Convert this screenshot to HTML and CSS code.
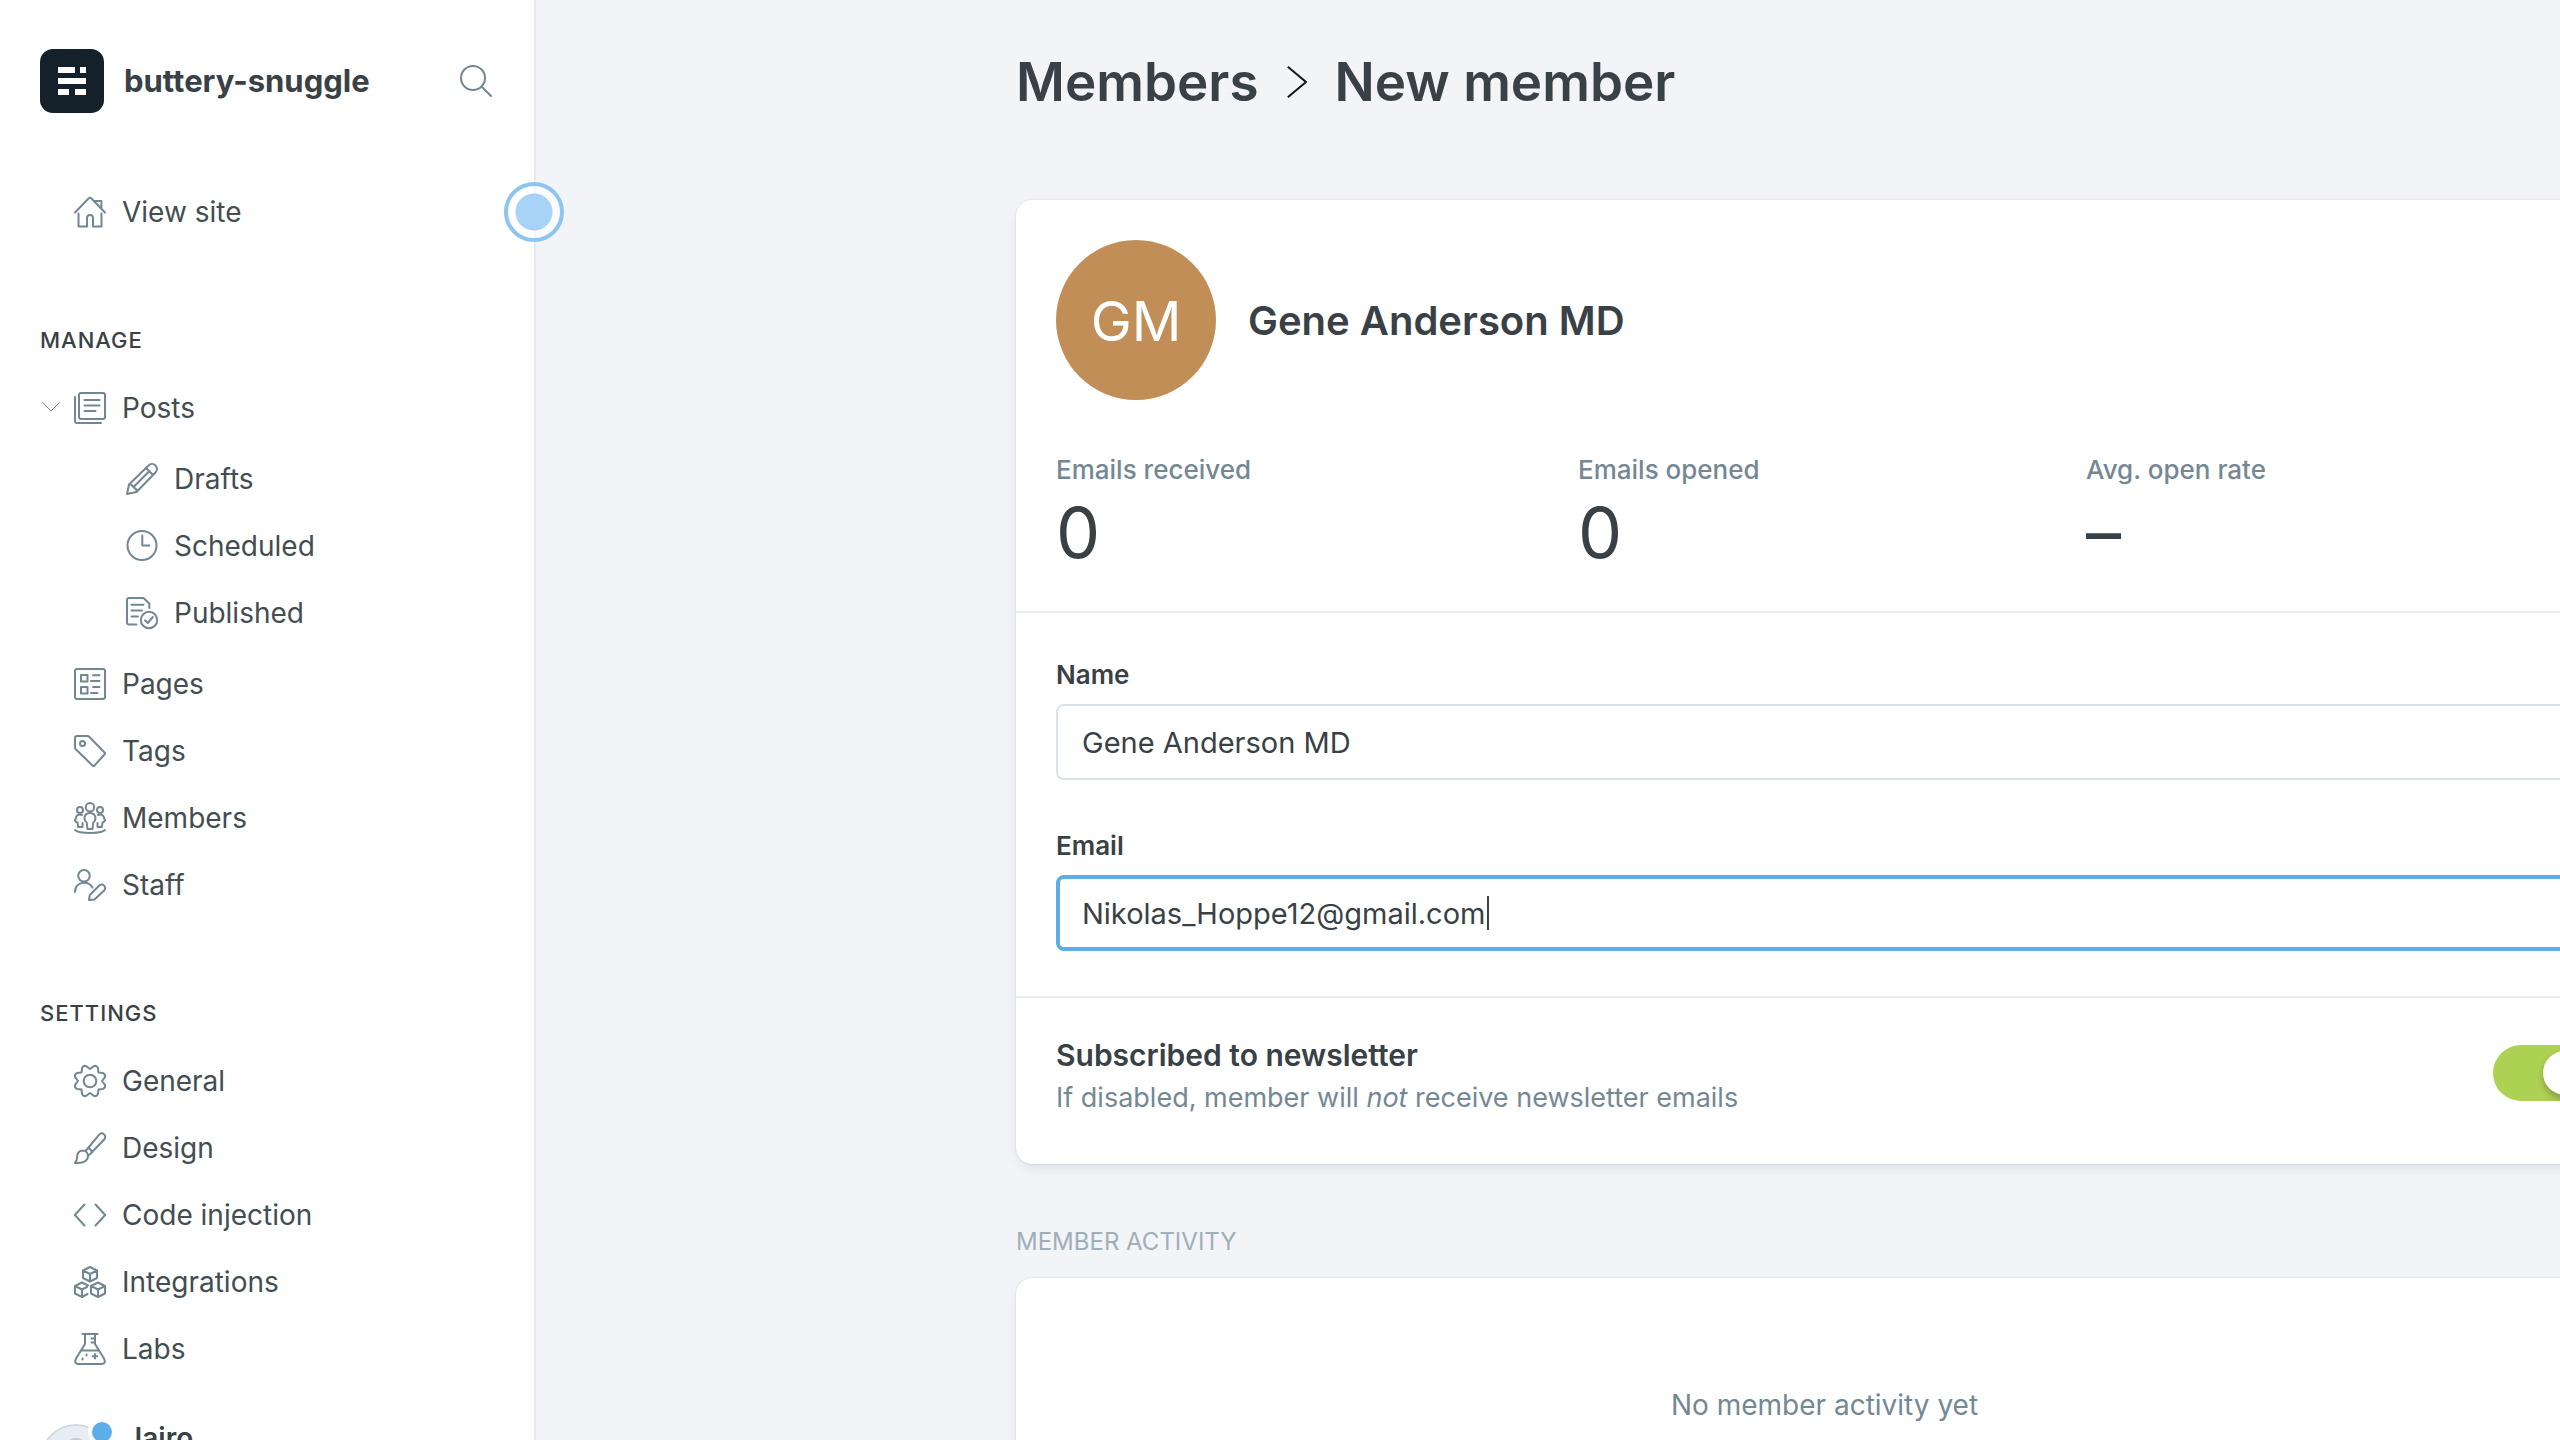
FILE: index.html
```html
<!DOCTYPE html>
<html lang="en">
<head>
<meta charset="utf-8">
<meta name="viewport" content="width=device-width, initial-scale=1">
<title>New member - buttery-snuggle</title>
<link rel="stylesheet" href="styles.css">
</head>
<body>
<div class="app">
  <aside class="sidebar">
    <header class="brand">
      <svg class="brand-logo" viewBox="0 0 64 64" aria-hidden="true">
        <rect width="64" height="64" rx="13" fill="#15212a"/>
        <path fill="#fff" d="M18 18h17v6H18zM40 18h6v6h-6zM18 29h28v6H18zM18 40h11v6H18zM35 40h11v6H35z"/>
      </svg>
      <span class="brand-name">buttery-snuggle</span>
      <button class="search" type="button" aria-label="Search">
        <svg class="icon" viewBox="0 0 32 32"><circle cx="13" cy="13" r="12"/><path d="M22 22l9 9"/></svg>
      </button>
    </header>

    <nav class="nav">
      <ul class="nav-list nav-top">
        <li><a class="nav-link" href="#"><svg class="icon" viewBox="0 0 32 32"><path d="M1 16.5L14.8 2.300q1.200-1 2.400 0L31 16.500M21 5h6.400v7.500M4.500 17.500V30.500h8.500V22q0-3 3-3t3 3v8.500h8.500V17.500"/></svg>View site</a></li>
      </ul>

      <h2 class="nav-title">Manage</h2>
      <ul class="nav-list">
        <li class="nav-parent">
          <button class="toggle-posts" type="button" aria-label="Collapse posts"><svg class="chevron" viewBox="0 0 18 10"><path d="M.5.5L9 9 17.500.5"/></svg></button>
          <a class="nav-link" href="#"><svg class="icon" viewBox="0 0 32 32"><rect x="5" y="1" width="26" height="26" rx="2"/><path d="M1 5v24q0 2 2 2h24M10.500 8h15M10.500 13.500h15M10.500 19h11"/></svg>Posts</a>
          <ul class="nav-list nav-sub">
            <li><a class="nav-link" href="#"><svg class="icon" viewBox="0 0 32 32"><path d="M1 31l2-9.500L22.500 2.500a4.900 4.900 0 0 1 7 7L10.500 29zM3 21.500q2.500-.5 3.500 1.500l2 2q2.500 1 2 4M20 5l7 7M8 23.500L23.500 8"/></svg>Drafts</a></li>
            <li><a class="nav-link" href="#"><svg class="icon" viewBox="0 0 32 32"><circle cx="16" cy="15.500" r="14.500"/><path d="M16.300 5.500v10h7"/></svg>Scheduled</a></li>
            <li><a class="nav-link" href="#"><svg class="icon" viewBox="0 0 32 32"><path d="M10.500 27.500H3q-2 0-2-2V3q0-2 2-2h14.500L23.300 6.500v4.500M5.500 7.800h12M5.500 13.500h10.500M5.500 19.500h6.500"/><circle cx="23" cy="23" r="8.200"/><path d="M19 23.300l2.800 2.700 5-6"/></svg>Published</a></li>
          </ul>
        </li>
        <li><a class="nav-link" href="#"><svg class="icon" viewBox="0 0 32 32"><rect x="1" y="1" width="30" height="30" rx="2"/><path d="M7 7h6.500v6.500H7zM7 19h6.500v6.500H7zM19 7.300h6.500M17 13h8.500M19 19h6.500M17 25h6.500"/></svg>Pages</a></li>
        <li><a class="nav-link" href="#"><svg class="icon" viewBox="0 0 32 32"><path d="M1 3q0-2 2-2h10q1.500 0 2.500 1L30.500 17.500q1 1 0 2L20.500 30.500q-1 1-2 0L2 14.500q-1-1-1-2z"/><circle cx="8.500" cy="8.500" r="2.500"/></svg>Tags</a></li>
        <li><a class="nav-link" href="#"><svg class="icon" viewBox="0 0 32 32"><circle cx="16" cy="5.200" r="4.200"/><circle cx="6" cy="8" r="3"/><circle cx="26" cy="8" r="3"/><path d="M16 11c-3.500 0-5.500 2.300-5.500 5.500 0 2 .8 3.200 2.200 4l.8 6.500h5l.8-6.500c1.400-.8 2.200-2 2.200-4 0-3.200-2-5.500-5.500-5.500zM8 13c-3.500-1.200-6 .5-6 3L.8 18.500q1.200 1.700 2.700 2l.7 4.500H8.500V21M24 13c3.500-1.200 6 .5 6 3l1.200 2.500q-1.200 1.700-2.700 2l-.7 4.500H23.500V21M1 28c5 4 25 4 30 0"/></svg>Members</a></li>
        <li><a class="nav-link" href="#"><svg class="icon" viewBox="0 0 32 32"><circle cx="10" cy="6.800" r="5.800"/><path d="M1 23c0-6 4-9.300 9-9.300 4 0 7 1.800 8.500 5M15 31l.8-5L25.500 16.300a3.500 3.500 0 0 1 4.900 4.900L20.500 30.500z"/></svg>Staff</a></li>
      </ul>

      <h2 class="nav-title">Settings</h2>
      <ul class="nav-list">
        <li><a class="nav-link" href="#"><svg class="icon" viewBox="0 0 32 32"><path d="M16 4L19.700 1.200Q22.600.1 23.900 2.900L24.500 7.500 29.100 8.100Q31.900 9.400 30.800 12.300L28 16 30.800 19.700Q31.900 22.600 29.100 23.900L24.500 24.500 23.900 29.100Q22.600 31.900 19.700 30.800L16 28 12.300 30.800Q9.400 31.900 8.100 29.100L7.500 24.500 2.900 23.900Q.1 22.600 1.200 19.700L4 16 1.200 12.300Q.1 9.400 2.900 8.100L7.500 7.500 8.100 2.900Q9.400.1 12.300 1.200z"/><circle cx="16" cy="16" r="6.300"/></svg>General</a></li>
        <li><a class="nav-link" href="#"><svg class="icon" viewBox="0 0 32 32"><path d="M14.500 15.500L25 2.800c3-3.500 8.500.500 5 5L18 20M11.500 19l3-3.500L18.500 20l-3.500 3M8.500 18.500c-4 .3-5.500 3.500-5.500 7 0 2.500-.5 4-2 5.500 6 .5 13-1 13-7 0-3.200-2.500-5.500-5.500-5.500z"/></svg>Design</a></li>
        <li><a class="nav-link" href="#"><svg class="icon" viewBox="0 0 32 32"><path d="M10.500 5.500L.8 16l9.700 10.500M21.500 5.500L31.200 16l-9.700 10.500"/></svg>Code injection</a></li>
        <li><a class="nav-link" href="#"><svg class="icon" viewBox="0 0 32 32"><path d="M16 1l7 3.500v7.500L16 15.500 9 12V4.500zM9 4.500L16 8l7-3.500M16 8v7.500M8 16.500l6 3M13.500 28L8 31 1 27.500V20L8 16.500M1 20l7 3.500 5-2.500M8 23.500V31M24 16.500l7 3.500v7.500L24 31l-7-3.500V20zM17 20l7 3.500 7-3.500M24 23.500V31"/></svg>Integrations</a></li>
        <li><a class="nav-link" href="#"><svg class="icon" viewBox="0 0 32 32"><path d="M8.500 1h15M11 1v10L2 25.500Q-.5 31 4.500 31h23q5 0 2.500-5.500L21 11V1M17.500 5.500H21M17.500 9.500H21M7.500 17.500h17M21 21v4.500M18.700 23.200h4.500M12.500 21.500v1M8.500 25.500v1"/></svg>Labs</a></li>
      </ul>
    </nav>

    <footer class="user">
      <span class="user-avatar">
        <svg viewBox="0 0 72 72" aria-hidden="true"><circle cx="36" cy="36" r="35" fill="#e6edf4" stroke="#d3dae1" stroke-width="2"/><circle cx="36" cy="26" r="12" fill="#c3ccd4"/></svg>
        <span class="user-dot"></span>
      </span>
      <span class="user-name">Jairo</span>
    </footer>
    <span class="beacon"></span>
  </aside>

  <main class="main">
    <div class="content">
      <h1 class="page-title"><a href="#">Members</a><svg class="crumb" viewBox="0 0 20 32" aria-hidden="true"><path d="M.8.8L19 16 .8 31.200"/></svg>New member</h1>

      <form class="card">
        <section class="profile">
          <div class="identity">
            <span class="avatar">GM</span>
            <h2 class="member-name">Gene Anderson MD</h2>
          </div>
          <dl class="stats">
            <div><dt>Emails received</dt><dd>0</dd></div>
            <div><dt>Emails opened</dt><dd>0</dd></div>
            <div><dt>Avg. open rate</dt><dd>–</dd></div>
          </dl>
        </section>

        <section class="fields">
          <div class="field">
            <label for="member-name">Name</label>
            <input class="text-input" id="member-name" type="text" value="Gene Anderson MD">
          </div>
          <div class="field">
            <label for="member-email">Email</label>
            <div class="input-wrap">
              <input class="text-input is-focused" id="member-email" type="text" inputmode="email" value="Nikolas_Hoppe12@gmail.com">
              <span class="caret"></span>
            </div>
          </div>
        </section>

        <section class="newsletter">
          <div>
            <label class="newsletter-title" for="subscribed">Subscribed to newsletter</label>
            <p class="newsletter-note">If disabled, member will <em>not</em> receive newsletter emails</p>
          </div>
          <input class="switch" id="subscribed" type="checkbox" checked>
        </section>
      </form>

      <h3 class="section-title">Member activity</h3>
      <section class="card activity">No member activity yet</section>
    </div>
  </main>
</div>
</body>
</html>
```
FILE: styles.css
```css
* {
  box-sizing: border-box;
}

body {
  margin: 0;
  background: #f2f4f8;
  color: #394146;
  font-family: Inter, "Liberation Sans", sans-serif;
  font-size: 28px;
  line-height: 40px;
}

h1, h2, h3, p, ul, dl, dd {
  margin: 0;
  padding: 0;
}

ul {
  list-style: none;
}

a {
  color: inherit;
  text-decoration: none;
}

button {
  padding: 0;
  border: 0;
  background: none;
}

.app {
  display: flex;
  height: 100vh;
  overflow: hidden;
}

/* Sidebar */
.sidebar {
  position: relative;
  flex: 0 0 536px;
  border-right: 2px solid #e5e9f1;
  background: #fff;
}

.brand {
  display: flex;
  align-items: center;
  gap: 20px;
  padding: 49px 42px 0 40px;
}

.brand-logo {
  width: 64px;
  height: 64px;
}

.brand-name {
  flex: 1;
  font-size: 31px;
  font-weight: 700;
}

.icon,
.chevron {
  display: block;
  flex: none;
  width: 32px;
  height: 32px;
  fill: none;
  stroke: #738792;
  stroke-width: 2;
  stroke-linecap: round;
  stroke-linejoin: round;
  overflow: visible;
}

.chevron {
  width: 18px;
  height: 10px;
  stroke-width: 1;
}

.nav-link {
  display: flex;
  align-items: center;
  gap: 16px;
  height: 67px;
  padding-left: 74px;
  color: #444d52;
}

.nav-top {
  padding: 65px 0 0;
}

.nav-title {
  margin: 76px 0 15px;
  padding-left: 40px;
  font-size: 22px;
  font-weight: 500;
  line-height: 38px;
  letter-spacing: 1px;
  text-transform: uppercase;
}

.nav-parent {
  position: relative;
}

.toggle-posts {
  position: absolute;
  top: 28px;
  left: 42px;
}

.nav-sub {
  padding: 4px 0 4px 52px;
}

.user {
  display: flex;
  align-items: center;
  gap: 14px;
  padding: 42px 40px;
}

.user-avatar {
  position: relative;
  width: 72px;
  height: 72px;
}

.user-dot {
  position: absolute;
  top: -6px;
  right: -4px;
  width: 28px;
  height: 28px;
  border: 4px solid #fff;
  border-radius: 50%;
  background: #5dade9;
}

.user-name {
  align-self: flex-start;
  font-weight: 600;
  line-height: 28px;
}

.beacon {
  position: absolute;
  top: 182px;
  right: -30px;
  width: 60px;
  height: 60px;
  border: 4px solid #8cc5f2;
  border-radius: 50%;
  background: radial-gradient(circle, #a8d3f6 0 18px, rgba(255, 255, 255, .6) 19px);
}

/* Member page */
.main {
  flex: 1;
  min-width: 0;
  padding-left: 480px;
  overflow: hidden;
}

.content {
  margin-right: -73px;
}

.page-title {
  display: flex;
  align-items: center;
  gap: 28px;
  padding: 42px 0 78px;
  font-size: 53px;
  font-weight: 600;
  line-height: 80px;
}

.crumb {
  width: 20px;
  height: 32px;
  fill: none;
  stroke: #15171a;
  stroke-width: 2;
}

.card {
  border-radius: 16px;
  background: #fff;
  box-shadow: 0 0 2px rgba(20, 30, 50, .16), 0 6px 14px -4px rgba(20, 30, 50, .12);
}

.profile {
  padding: 40px 40px 38px;
  border-bottom: 2px solid #e6ecf2;
}

.identity {
  display: flex;
  align-items: center;
  gap: 32px;
}

.avatar {
  width: 160px;
  height: 160px;
  border-radius: 50%;
  background: #c18e58;
  color: #fff;
  font-size: 55px;
  line-height: 162px;
  text-align: center;
}

.member-name {
  padding-top: 2px;
  font-size: 40px;
  font-weight: 600;
  line-height: 48px;
}

.stats {
  display: grid;
  grid-template-columns: 522px 508px 1fr;
  padding-top: 50px;
}

.stats dt {
  color: #748894;
  font-size: 26px;
  font-weight: 500;
}

.stats dd {
  padding-top: 3px;
  font-size: 70px;
  line-height: 80px;
}

.fields {
  display: grid;
  gap: 46px;
  padding: 42px 40px 45px;
  border-bottom: 2px solid #e6ecf2;
}

.field label {
  display: block;
  margin-bottom: 9px;
  font-size: 26px;
  font-weight: 600;
}

.input-wrap {
  position: relative;
}

.text-input {
  display: block;
  width: 100%;
  height: 76px;
  padding: 0 24px;
  border: 2px solid #d8e3ea;
  border-radius: 8px;
  outline: 0;
  background: #fff;
  color: inherit;
  font: inherit;
  font-size: 29px;
}

.text-input.is-focused {
  padding: 0 22px;
  border: 4px solid #5dade9;
}

.caret {
  position: absolute;
  top: 21px;
  left: 431px;
  width: 2px;
  height: 34px;
  background: #394146;
}

.newsletter {
  display: flex;
  align-items: flex-start;
  justify-content: space-between;
  padding: 37px 40px 44px;
}

.newsletter-title {
  font-size: 30px;
  font-weight: 600;
}

.newsletter-note {
  color: #748894;
  font-size: 27px;
  line-height: 44px;
}

.switch {
  appearance: none;
  width: 100px;
  height: 56px;
  margin: 10px 0 0;
  padding: 6px;
  border-radius: 28px;
  background: #add153;
}

.switch::before {
  content: "";
  display: block;
  width: 44px;
  height: 44px;
  margin-left: 44px;
  border-radius: 50%;
  background: #fff;
  box-shadow: 0 4px 6px rgba(0, 0, 0, .25);
}

.section-title {
  padding: 58px 0 16px;
  color: #9fafb8;
  font-size: 24px;
  font-weight: 400;
  text-transform: uppercase;
}

.activity {
  padding: 107px 40px;
  color: #748894;
  text-align: center;
}
```
